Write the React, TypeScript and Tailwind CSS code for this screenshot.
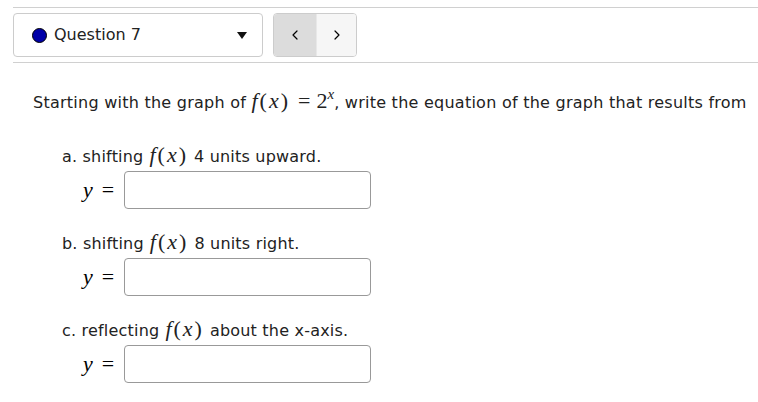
import { ChevronLeft, ChevronRight } from 'lucide-react'

const sans = { fontFamily: '"DejaVu Sans", Verdana, sans-serif' }

function Fx() {
  return (
    <span className="font-['Liberation_Serif',serif] text-[22px] leading-[20px] tracking-[2px] whitespace-nowrap">
      <i>f</i>(<i>x</i>)
    </span>
  )
}

function Answer({ label, children }: { label: string; children: React.ReactNode }) {
  return (
    <div className="pl-[62px]">
      <div className="h-[22px] text-[16px] leading-[20px] text-[#222] flex items-baseline gap-[6px] tracking-[0.2px]">
        <span>{label}</span>
        {children}
      </div>
      <div className="flex items-center mt-[4px] pl-[21px]">
        <span className="font-['Liberation_Serif',serif] text-[22px] leading-none w-[41px] whitespace-nowrap">
          <i>y</i>
          <span className="ml-[9px]">=</span>
        </span>
        <input className="w-[247px] h-[38px] border border-[#999] rounded-[4px] bg-white outline-none" />
      </div>
    </div>
  )
}

export default function App() {
  return (
    <div className="w-[758px] h-[402px] bg-white overflow-hidden text-black" style={sans}>
      <div className="mt-[7px] ml-[13px] border-t border-[#d0d0d0]">
        <div className="flex gap-[10px] py-[5px]">
          <div className="w-[250px] h-[44px] border border-[#ccc] rounded-[4px] flex items-center pl-[18px] pr-[15px]">
            <span className="w-[15px] h-[15px] rounded-full bg-[#0000a8] border border-black" />
            <span className="ml-[7px] text-[16px] text-[#222] flex-1">Question 7</span>
            <svg width="10" height="7" viewBox="0 0 10 7">
              <polygon points="0,0 10,0 5,7" fill="#111" />
            </svg>
          </div>
          <div className="flex h-[44px] w-[84px] border border-[#ccc] rounded-[4px] overflow-hidden">
            <button className="w-[43px] bg-[#dcdcdc] border-r border-[#e8e8e8] flex items-center justify-center">
              <ChevronLeft size={16} strokeWidth={1.8} />
            </button>
            <button className="flex-1 bg-[#f6f6f6] flex items-center justify-center">
              <ChevronRight size={16} strokeWidth={1.8} />
            </button>
          </div>
        </div>
        <div className="border-t border-[#d0d0d0]" />
      </div>

      <p className="mt-[27px] ml-[33px] text-[16px] leading-[24px] text-[#222] whitespace-nowrap tracking-[0.25px]">
        Starting with the graph of{' '}
        <span className="font-['Liberation_Serif',serif] text-[22px] leading-none tracking-normal">
          <span className="tracking-[2px]">
            <i>f</i>(<i>x</i>)
          </span>
          <span className="ml-[8px] mr-[6px]">=</span>
          2<sup className="text-[15px] -top-[9px]"><i>x</i></sup>
        </span>
        , write the equation of the graph that results from
      </p>

      <div className="mt-[30px] flex flex-col gap-[23px]">
        <Answer label="a. shifting">
          <Fx />
          <span>4 units upward.</span>
        </Answer>
        <Answer label="b. shifting">
          <Fx />
          <span>8 units right.</span>
        </Answer>
        <Answer label="c. reflecting">
          <Fx />
          <span>about the x-axis.</span>
        </Answer>
      </div>
    </div>
  )
}
